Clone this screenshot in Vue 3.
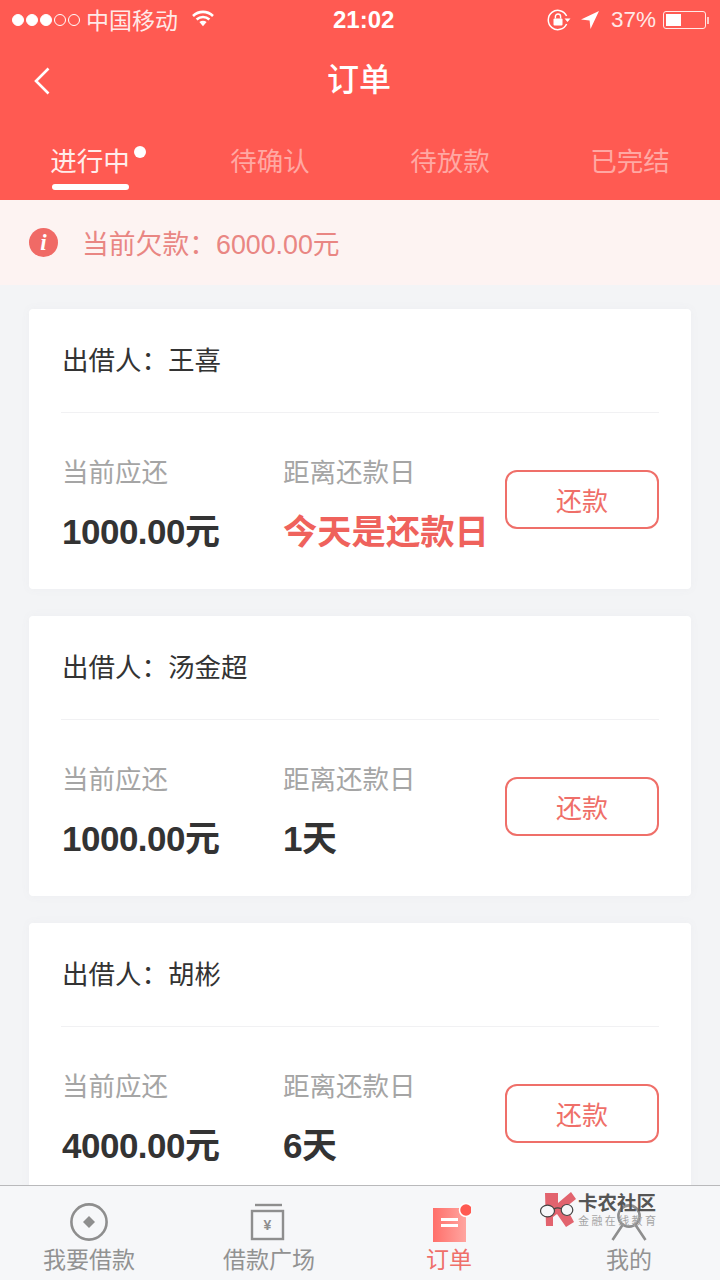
<template>
  <div class="page">
    <header class="head">
      <div class="status">
        <div class="status-left">
          <span class="signal">
            <i v-for="n in 5" :key="n" class="sig" :class="{ on: n <= 3 }"></i>
          </span>
          <span class="carrier">中国移动</span>
          <svg class="wifi" viewBox="0 0 22 16" width="22" height="17">
            <path d="M1 5.500C6.800 0 15.200 0 21 5.500" fill="none" stroke="#fff" stroke-width="2.600" />
            <path d="M4.600 9C8.400 5.600 13.600 5.600 17.400 9" fill="none" stroke="#fff" stroke-width="2.600" />
            <path d="M7.400 11.400 11 15.800l3.600-4.400C12.400 9.800 9.600 9.800 7.400 11.400Z" fill="#fff" />
          </svg>
        </div>
        <div class="time">21:02</div>
        <div class="status-right">
          <svg class="lock" viewBox="0 0 24 22" width="24" height="22">
            <path d="M19.600 7A9.600 9.600 0 1 0 19.600 15" fill="none" stroke="#fff" stroke-width="1.500" />
            <path d="M17.500 9.500h6l-3 3.600Z" fill="#fff" />
            <rect x="6.500" y="9.500" width="9" height="7" rx="1" fill="#fff" />
            <path d="M8.400 9.500V7.600a2.600 2.600 0 0 1 5.200 0v1.900" fill="none" stroke="#fff" stroke-width="1.400" />
          </svg>
          <svg class="arrow" viewBox="0 0 18 18" width="18" height="18">
            <path d="M18 0 0 8.600l8.600.9.900 8.500Z" fill="#fff" />
          </svg>
          <span class="pct">37%</span>
          <span class="battery"><span class="battery-fill"></span></span>
          <span class="battery-cap"></span>
        </div>
      </div>
      <div class="nav">
        <svg class="back" viewBox="0 0 18 28" width="18" height="28">
          <path d="M15.500 1.500 3 14l12.500 12.500" fill="none" stroke="#fff" stroke-width="2.600" />
        </svg>
        <h1 class="title">订单</h1>
      </div>
      <nav class="tabs">
        <div v-for="(t, i) in tabs" :key="t" class="tab" :class="{ active: i === 0 }">
          <span class="tab-text">
            {{ t }}
            <i v-if="i === 0" class="tab-dot"></i>
          </span>
        </div>
      </nav>
    </header>

    <div class="notice">
      <span class="notice-icon">i</span>
      <span class="notice-text">当前欠款：6000.00元</span>
    </div>

    <main class="list">
      <section v-for="o in orders" :key="o.name" class="card">
        <div class="lender">出借人：{{ o.name }}</div>
        <div class="info">
          <div class="col col-amount">
            <div class="label">当前应还</div>
            <div class="value">{{ o.amount }}元</div>
          </div>
          <div class="col col-days">
            <div class="label">距离还款日</div>
            <div class="value" :class="{ today: o.today }">{{ o.days }}</div>
          </div>
          <button class="pay">还款</button>
        </div>
      </section>
    </main>

    <footer class="bar">
      <div class="bar-item">
        <svg viewBox="0 0 40 40" width="40" height="40">
          <circle cx="20" cy="20" r="17.600" fill="none" stroke="#8e8e8e" stroke-width="2.600" />
          <path d="M20 14l6 6-6 6-6-6Z" fill="#8e8e8e" />
        </svg>
        <span>我要借款</span>
      </div>
      <div class="bar-item">
        <svg viewBox="0 0 40 40" width="40" height="40">
          <path d="M6 3h27" stroke="#8e8e8e" stroke-width="2.400" />
          <rect x="3" y="9" width="31" height="28" fill="none" stroke="#8e8e8e" stroke-width="2.400" />
          <text x="18.500" y="28" class="yen">¥</text>
        </svg>
        <span>借款广场</span>
      </div>
      <div class="bar-item current">
        <svg viewBox="0 0 44 40" width="44" height="40">
          <defs>
            <linearGradient id="orderFill" x1="0" y1="0" x2="1" y2="0">
              <stop offset="0" stop-color="#ff6f6a" />
              <stop offset="1" stop-color="#ffa5a0" />
            </linearGradient>
          </defs>
          <rect x="6" y="6" width="33" height="34" fill="url(#orderFill)" />
          <path d="M14 16h17v3H14ZM14 22h17v3H14Z" fill="#fff" />
          <circle cx="39" cy="8" r="6.500" fill="#ff5a52" stroke="#fff" stroke-width="1.500" />
        </svg>
        <span>订单</span>
      </div>
      <div class="bar-item">
        <svg viewBox="0 0 40 40" width="40" height="40">
          <circle cx="20" cy="14" r="10.600" fill="none" stroke="#8e8e8e" stroke-width="2.600" />
          <path d="M3.500 38 13.500 23M36.500 38 26.500 23" fill="none" stroke="#8e8e8e" stroke-width="2.600" />
        </svg>
        <span>我的</span>
      </div>
    </footer>

    <div class="mark">
      <svg viewBox="0 0 38 36" width="38" height="36">
        <path d="M5 1h13v10L31 0l5 7-10 8 8 15-8 5-9-13-4 3v9H6Z" fill="#e2636e" />
        <ellipse cx="7.500" cy="19" rx="7" ry="5.800" fill="#f6f7f9" stroke="#444" stroke-width="1.200" />
        <ellipse cx="27" cy="18" rx="5.800" ry="5.500" fill="#f6f7f9" stroke="#444" stroke-width="1.200" />
        <path d="M14 17q3-2 7-.5" fill="none" stroke="#444" stroke-width="1.200" />
      </svg>
      <div class="mark-text">
        <div class="mark-name">卡农社区</div>
        <div class="mark-sub">金融在线教育</div>
      </div>
    </div>
  </div>
</template>

<script setup>
const tabs = ['进行中', '待确认', '待放款', '已完结']

const orders = [
  { name: '王喜', amount: '1000.00', days: '今天是还款日', today: true },
  { name: '汤金超', amount: '1000.00', days: '1天', today: false },
  { name: '胡彬', amount: '4000.00', days: '6天', today: false }
]
</script>

<style>
html,
body {
  margin: 0;
  background: #f3f4f6;
}
</style>

<style scoped>
.page {
  position: relative;
  display: flex;
  flex-direction: column;
  width: 720px;
  height: 1280px;
  overflow: hidden;
  background: #f3f4f6;
  font-family: "Liberation Sans", "Noto Sans CJK SC", sans-serif;
  color: #333;
}

.head {
  flex: none;
  height: 200px;
  background: #ff5a52;
  color: #fff;
}

.status {
  position: relative;
  display: flex;
  align-items: center;
  justify-content: space-between;
  height: 40px;
  padding: 0 11px 0 12px;
  font-size: 23px;
}

.status-left,
.status-right {
  display: flex;
  align-items: center;
}

.signal {
  display: flex;
  gap: 2px;
  margin-right: 6px;
}

.sig {
  width: 12px;
  height: 12px;
  box-sizing: border-box;
  border: 1px solid #fff;
  border-radius: 50%;
}

.sig.on {
  background: #fff;
}

.carrier {
  position: relative;
  top: -1px;
  color: #ffe9e7;
}

.wifi {
  margin-left: 14px;
  margin-top: -4px;
}

.time {
  position: absolute;
  left: 333px;
  font-weight: 600;
  font-size: 24px;
}

.lock {
  margin-right: 10px;
}

.arrow {
  margin-right: 12px;
}

.pct {
  margin-right: 7px;
  font-size: 22.500px;
  color: #ffe9e7;
}

.battery {
  box-sizing: border-box;
  width: 43px;
  height: 18px;
  padding: 2px;
  border: 1px solid #ffe9e7;
  border-radius: 3px;
}

.battery-fill {
  display: block;
  width: 15px;
  height: 100%;
  background: #fff;
}

.battery-cap {
  width: 2px;
  height: 7px;
  margin-left: 1px;
  background: #ffc9c6;
}

.nav {
  position: relative;
  display: flex;
  align-items: center;
  justify-content: center;
  height: 80px;
}

.back {
  position: absolute;
  left: 33px;
  top: 27px;
}

.title {
  margin: 0;
  font-size: 32px;
  font-weight: 500;
  line-height: 80px;
  transform: translateX(-1px);
}

.tabs {
  display: grid;
  grid-template-columns: repeat(4, 180px);
  height: 80px;
}

.tab {
  position: relative;
  padding-top: 22px;
  font-size: 26.500px;
  line-height: 40px;
  text-align: center;
  color: #ffa8a3;
}

.tab.active {
  color: #ffecea;
}

.tab-text {
  position: relative;
  display: inline-block;
}

.tab.active::after {
  content: "";
  position: absolute;
  left: 52px;
  top: 64px;
  width: 77px;
  height: 6px;
  border-radius: 3px;
  background: #fff;
}

.tab-dot {
  position: absolute;
  left: 84px;
  top: 4px;
  width: 12px;
  height: 12px;
  border-radius: 50%;
  background: #fff;
}

.notice {
  flex: none;
  display: flex;
  align-items: center;
  height: 85px;
  padding-left: 29px;
  background: #fdf3f2;
}

.notice-icon {
  display: flex;
  align-items: center;
  justify-content: center;
  width: 29px;
  height: 29px;
  margin-right: 24px;
  border-radius: 50%;
  background: #f06a66;
  color: #fff;
  font-family: "Liberation Serif", serif;
  font-size: 23px;
  font-style: italic;
  font-weight: 700;
}

.notice-text {
  font-size: 26.800px;
  color: #e98683;
}

.list {
  flex: 1;
  min-height: 0;
  display: flex;
  flex-direction: column;
  gap: 27px;
  padding: 24px 29px 0;
}

.card {
  flex: none;
  height: 280px;
  box-sizing: border-box;
  padding: 0 32px;
  background: #fff;
  border-radius: 4px;
  box-shadow: 0 0 10px rgba(120, 125, 140, 0.05);
}

.lender {
  height: 103px;
  padding-left: 1px;
  border-bottom: 1px solid #f1f1f3;
  font-size: 26.500px;
  line-height: 104px;
  color: #333;
}

.info {
  position: relative;
  display: flex;
  align-items: flex-start;
  padding: 40px 0 0 1px;
}

.col-amount {
  width: 221px;
}

.col-days {
  flex: 1;
}

.label {
  font-size: 26.500px;
  line-height: 40px;
  color: #a5a5a5;
}

.value {
  margin-top: 18px;
  font-size: 35px;
  font-weight: 700;
  line-height: 42px;
  letter-spacing: -0.500px;
  color: #333;
  white-space: nowrap;
}

.value.today {
  font-size: 34.300px;
  letter-spacing: 0;
  color: #ef625c;
}

.pay {
  position: absolute;
  top: 57px;
  right: 0;
  width: 154px;
  height: 59px;
  padding: 0;
  border: 2px solid #ef6f69;
  border-radius: 12px;
  background: #fff;
  font-family: inherit;
  font-size: 26px;
  color: #ef6f69;
}

.bar {
  position: absolute;
  left: -1px;
  right: 0;
  bottom: 0;
  display: grid;
  grid-template-columns: repeat(4, 180px);
  box-sizing: border-box;
  height: 95px;
  border-top: 1px solid #b9b9bb;
  background: #f6f7f9;
}

.bar-item {
  display: flex;
  flex-direction: column;
  align-items: center;
  padding-top: 16px;
  font-size: 23px;
  line-height: 30px;
  color: #929292;
}

.bar-item span {
  margin-top: 3px;
}

.bar-item.current {
  color: #ef6f69;
}

.yen {
  font-size: 14px;
  font-weight: 700;
  text-anchor: middle;
  fill: #8e8e8e;
}

.mark {
  position: absolute;
  left: 540px;
  top: 1192px;
  display: flex;
  align-items: center;
  gap: 0;
}

.mark-name {
  font-size: 19.500px;
  font-weight: 700;
  line-height: 22px;
  color: #555;
}

.mark-sub {
  font-size: 11px;
  line-height: 14px;
  letter-spacing: 2.400px;
  color: #a5a5a5;
}
</style>
